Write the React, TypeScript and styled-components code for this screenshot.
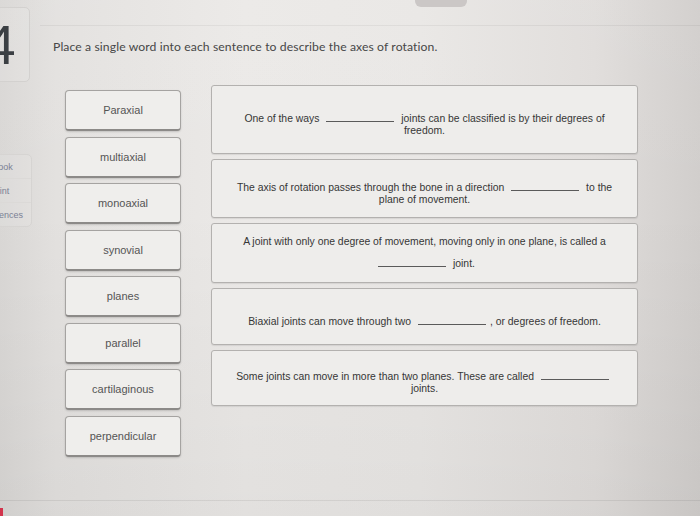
import React from "react";
import styled, { createGlobalStyle } from "styled-components";

const Global = createGlobalStyle`
  html, body { margin: 0; padding: 0; }
  body {
    width: 700px;
    height: 516px;
    overflow: hidden;
    font-family: "Liberation Sans", Arial, sans-serif;
    background:
      linear-gradient(180deg, rgba(255,255,255,0.05) 0%, rgba(0,0,0,0) 40%, rgba(0,0,0,0.04) 100%),
      linear-gradient(90deg, #d9d7d5 0%, #e3e1df 8%, #ebe9e7 35%, #e9e7e5 60%, #e0dddb 85%, #d1cecc 100%);
  }
`;

const Page = styled.div`
  position: relative;
  display: flex;
  width: 700px;
  height: 516px;
  overflow: hidden;
`;

const HeaderLine = styled.div`
  position: absolute;
  left: 40px;
  right: 0;
  top: 25px;
  height: 1px;
  background: rgba(0, 0, 0, 0.05);
`;

const TopTab = styled.div`
  position: absolute;
  top: 0;
  left: 415px;
  width: 52px;
  height: 7px;
  border-radius: 0 0 6px 6px;
  background: #cbc7c6;
`;

const FooterLine = styled.div`
  position: absolute;
  left: 0;
  right: 0;
  top: 500px;
  height: 1px;
  background: rgba(0, 0, 0, 0.07);
`;

const RedMark = styled.div`
  position: absolute;
  left: 0;
  top: 508px;
  width: 3px;
  height: 8px;
  background: #d2344c;
`;

const Rail = styled.div`
  width: 32px;
  flex: none;
  display: flex;
  flex-direction: column;
  padding-top: 7px;
`;

const NumberCard = styled.div`
  width: 60px;
  height: 75px;
  margin-left: -30px;
  box-sizing: border-box;
  border: 1px solid #d3d1cf;
  border-radius: 5px;
  background: rgba(255, 255, 255, 0.12);
  display: flex;
  align-items: center;
  justify-content: center;
  font-family: "Liberation Sans", Arial, sans-serif;
  font-size: 56px;
  line-height: 1;
  color: #3b3f43;
  padding-top: 0;
`;

const NavCard = styled.div`
  width: 64px;
  margin-left: -32px;
  margin-top: 72px;
  box-sizing: border-box;
  border: 1px solid #d6d4d2;
  border-radius: 5px;
  background: rgba(255, 255, 255, 0.1);
  display: flex;
  flex-direction: column;
`;

const NavItem = styled.div<{ $last?: boolean }>`
  height: 23px;
  display: flex;
  align-items: center;
  justify-content: center;
  font-family: "Liberation Sans", Arial, sans-serif;
  font-size: 9px;
  color: #7b8195;
  border-bottom: ${(p) => (p.$last ? "none" : "1px solid #dbd9d7")};
`;

const Content = styled.div`
  flex: 1;
  padding-left: 21px;
  display: flex;
  flex-direction: column;
`;

const Title = styled.div`
  margin-top: 40px;
  font-family: Lato, "Liberation Sans", sans-serif;
  font-size: 12.2px;
  line-height: 14px;
  color: #474747;
  letter-spacing: 0.1px;
`;

const Work = styled.div`
  margin-top: 31px;
  display: flex;
  align-items: flex-start;
`;

const Tiles = styled.div`
  margin-left: 12px;
  padding-top: 5px;
  width: 116px;
  display: flex;
  flex-direction: column;
  gap: 5.5px;
`;

const Tile = styled.div`
  height: 41px;
  box-sizing: border-box;
  border: 1px solid #a5a3a1;
  border-bottom: 2px solid #8c8a88;
  border-radius: 4px;
  background: #efeeec;
  box-shadow: 0 1px 2px rgba(0, 0, 0, 0.15);
  display: flex;
  align-items: center;
  justify-content: center;
  font-size: 11px;
  color: #555;
`;

const Sentences = styled.div`
  margin-left: 30px;
  width: 427px;
  display: flex;
  flex-direction: column;
  gap: 5px;
`;

const SentenceBox = styled.div<{ $h: number }>`
  height: ${(p) => p.$h}px;
  box-sizing: border-box;
  border: 1px solid #b3b1af;
  border-radius: 3px;
  background: #eeedeb;
  box-shadow: 0 1px 1px rgba(0, 0, 0, 0.08);
  display: flex;
  align-items: center;
  justify-content: center;
  padding: 0 18px;
`;

const SentenceText = styled.p`
  margin: 0;
  text-align: center;
  font-size: 10.4px;
  line-height: 12px;
  color: #363636;
`;

const Blank = styled.span`
  display: inline-block;
  width: 68px;
  height: 18px;
  margin: 0 4px;
  border-bottom: 1px solid #5a5a5a;
  vertical-align: baseline;
`;

const words = [
  "Paraxial",
  "multiaxial",
  "monoaxial",
  "synovial",
  "planes",
  "parallel",
  "cartilaginous",
  "perpendicular",
];

export default function App() {
  return (
    <>
      <Global />
      <Page>
        <HeaderLine />
        <TopTab />
        <FooterLine />
        <RedMark />
        <Rail>
          <NumberCard>4</NumberCard>
          <NavCard>
            <NavItem>Ebook</NavItem>
            <NavItem>Print</NavItem>
            <NavItem $last>References</NavItem>
          </NavCard>
        </Rail>
        <Content>
          <Title>Place a single word into each sentence to describe the axes of rotation.</Title>
          <Work>
            <Tiles>
              {words.map((w) => (
                <Tile key={w}>{w}</Tile>
              ))}
            </Tiles>
            <Sentences>
              <SentenceBox $h={69}>
                <SentenceText>
                  One of the ways <Blank /> joints can be classified is by their degrees of freedom.
                </SentenceText>
              </SentenceBox>
              <SentenceBox $h={59}>
                <SentenceText>
                  The axis of rotation passes through the bone in a direction <Blank /> to the plane of movement.
                </SentenceText>
              </SentenceBox>
              <SentenceBox $h={60}>
                <SentenceText>
                  A joint with only one degree of movement, moving only in one plane, is called a <Blank /> joint.
                </SentenceText>
              </SentenceBox>
              <SentenceBox $h={57}>
                <SentenceText>
                  Biaxial joints can move through two <Blank />, or degrees of freedom.
                </SentenceText>
              </SentenceBox>
              <SentenceBox $h={56}>
                <SentenceText>
                  Some joints can move in more than two planes. These are called <Blank /> joints.
                </SentenceText>
              </SentenceBox>
            </Sentences>
          </Work>
        </Content>
      </Page>
    </>
  );
}
